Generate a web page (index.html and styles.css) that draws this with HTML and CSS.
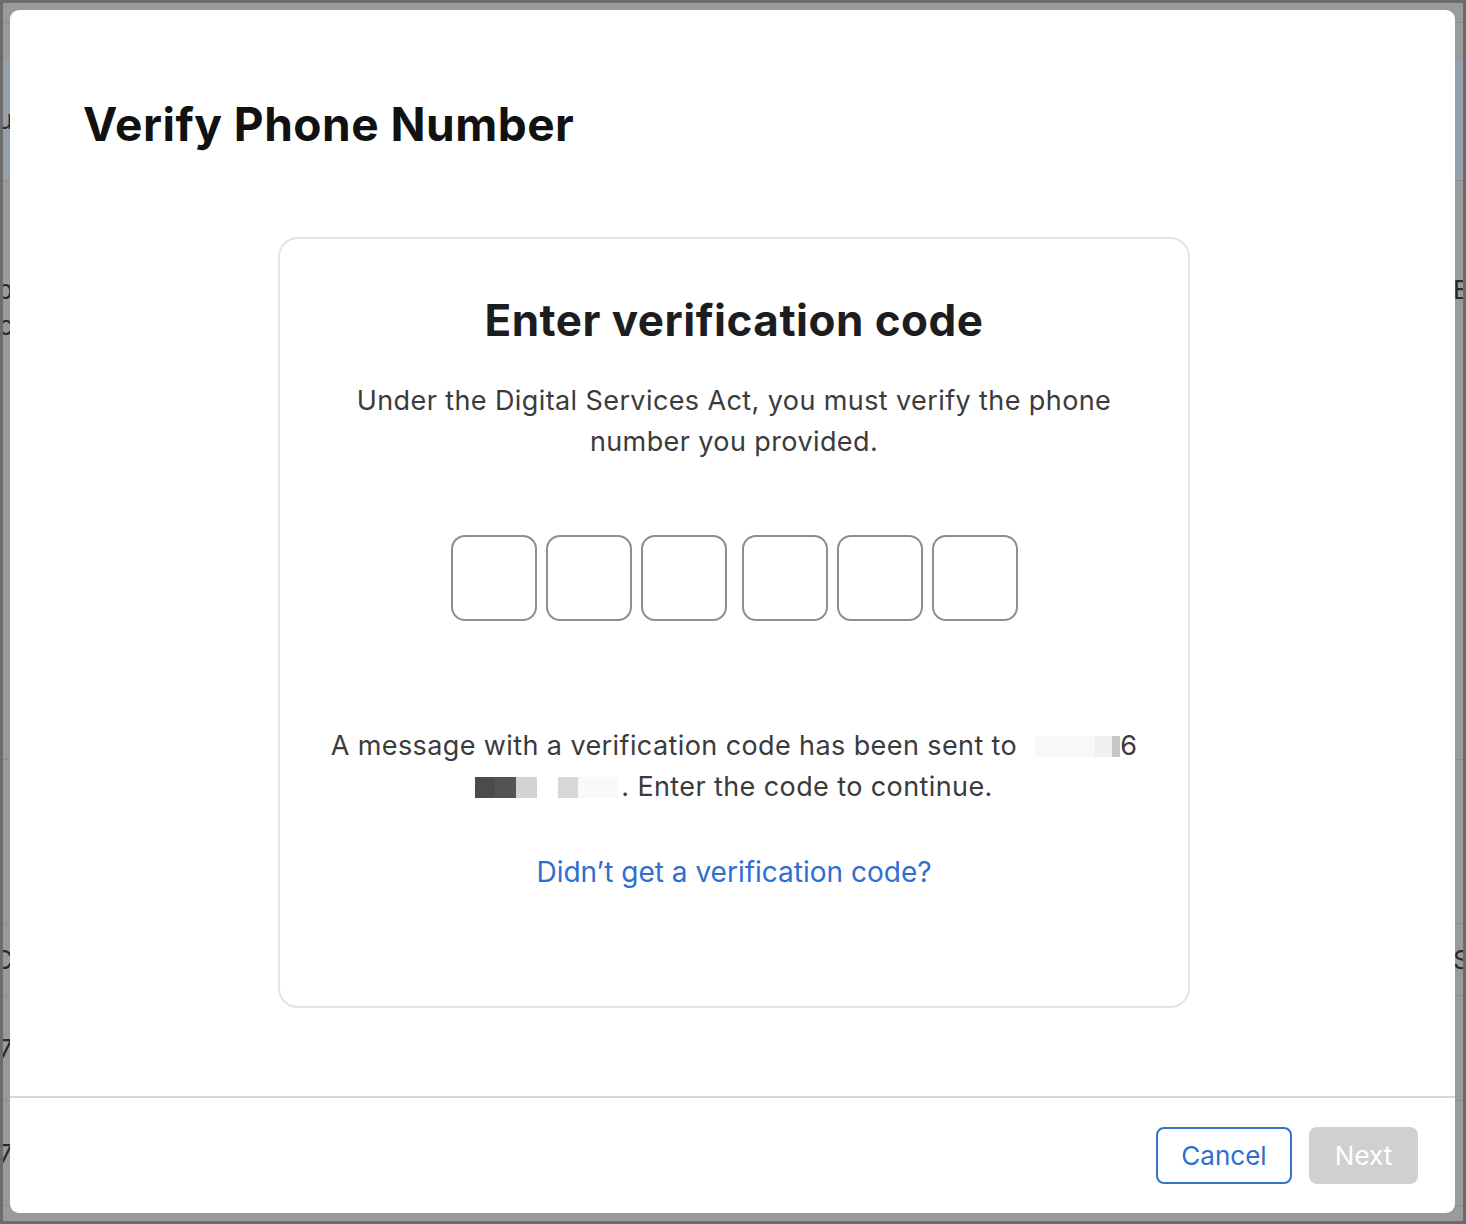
FILE: index.html
```html
<!DOCTYPE html>
<html lang="en">
<head>
    <meta charset="UTF-8">
    <meta name="viewport" content="width=device-width, initial-scale=1.0">
    <title>Verify Phone Number</title>
    <link rel="stylesheet" href="styles.css">
</head>
<body>
    <div class="page">
        <div class="bg-row bg-top"></div>
        <div class="bg-row bg-band"><span class="bg-left">ou</span><span class="bg-right"></span></div>
        <div class="bg-row bg-tall"><span class="bg-left">op<br>c</span><span class="bg-right">E</span></div>
        <div class="bg-row bg-mid"></div>
        <div class="bg-row bg-cell"><span class="bg-left">C</span><span class="bg-right">S</span></div>
        <div class="bg-row bg-cell2"><span class="bg-left">7!</span><span class="bg-right"></span></div>
        <div class="bg-row bg-cell2"><span class="bg-left">7!</span><span class="bg-right"></span></div>
    </div>

    <div class="modal">
        <div class="modal-body">
            <h1 class="modal-title">Verify Phone Number</h1>

            <section class="card">
                <h2 class="card-title">Enter verification code</h2>
                <p class="card-text">Under the Digital Services Act, you must verify the phone<br>number you provided.</p>

                <div class="code-inputs">
                    <div class="code-group">
                        <input class="code-box" type="text" maxlength="1">
                        <input class="code-box" type="text" maxlength="1">
                        <input class="code-box" type="text" maxlength="1">
                    </div>
                    <div class="code-group">
                        <input class="code-box" type="text" maxlength="1">
                        <input class="code-box" type="text" maxlength="1">
                        <input class="code-box" type="text" maxlength="1">
                    </div>
                </div>

                <p class="card-text message">A message with a verification code has been sent to <span class="redact r-light"><i></i><i></i><i></i><i class="dim"></i><i class="mid"></i></span>6<br><span class="redact r-dark"><i></i><i></i><i class="pale"></i></span><span class="redact r-dark2"><i class="pale"></i><i class="wide"></i></span>. Enter the code to continue.</p>

                <a class="resend" href="#">Didn’t get a verification code?</a>
            </section>
        </div>

        <footer class="modal-footer">
            <button class="btn btn-outline">Cancel</button>
            <button class="btn btn-disabled" disabled>Next</button>
        </footer>
    </div>
</body>
</html>
```

FILE: styles.css
```css
body, h1, h2, p {
    margin: 0;
    padding: 0;
}

body {
    font-family: Inter, "Noto Sans", sans-serif;
    background-color: #9a9a9a;
    border: 3px solid #6c6c6c;
    height: 1224px;
    box-sizing: border-box;
    overflow: hidden;
    position: relative;
}

/* page behind the overlay */
.page {
    display: flex;
    flex-direction: column;
    color: #2a2a2a;
    font-size: 26px;
    height: 1218px;
    overflow: hidden;
}

.bg-row {
    display: flex;
    justify-content: space-between;
    box-sizing: border-box;
    flex-shrink: 0;
    border-bottom: 1px solid #8c8c8c;
}

.bg-top {
    height: 20px;
}

.bg-band {
    height: 124px;
    margin-top: 34px;
    border-top: 1px solid #8e97a2;
    background-color: #97a0aa;
    align-items: center;
}

.bg-tall {
    height: 579px;
    padding-top: 91px;
    line-height: 36px;
    align-items: flex-start;
}

.bg-mid {
    height: 164px;
}

.bg-cell {
    height: 72px;
    align-items: center;
}

.bg-cell2 {
    height: 105px;
    align-items: center;
}

.bg-left {
    width: 10px;
    overflow: hidden;
    white-space: nowrap;
    direction: rtl;
    text-align: left;
}

.bg-right {
    width: 10px;
    overflow: hidden;
    white-space: nowrap;
}

/* modal */
.modal {
    position: absolute;
    top: 7px;
    left: 7px;
    width: 1445px;
    height: 1203px;
    background-color: #ffffff;
    border-radius: 9px;
    display: flex;
    flex-direction: column;
    color: #1d1d1f;
}

.modal-body {
    flex: 1;
    padding: 89px 73px 0;
    display: flex;
    flex-direction: column;
}

.modal-title {
    font-size: 46px;
    line-height: 50px;
    font-weight: 700;
    letter-spacing: 0.5px;
    color: #111111;
}

.card {
    align-self: center;
    margin: 88px 0 0 3px;
    width: 912px;
    height: 771px;
    box-sizing: border-box;
    border: 2px solid #e4e4e4;
    border-radius: 20px;
    display: flex;
    flex-direction: column;
    align-items: center;
    text-align: center;
    padding-top: 51px;
}

.card-title {
    font-size: 44px;
    line-height: 60px;
    font-weight: 700;
    letter-spacing: 0.5px;
    color: #1d1d1f;
}

.card-text {
    margin-top: 30px;
    font-size: 27px;
    line-height: 41px;
    letter-spacing: 0.4px;
    color: #3b3b3b;
}

.code-inputs {
    display: flex;
    gap: 15px;
    margin-top: 73px;
}

.code-group {
    display: flex;
    gap: 9px;
}

.code-box {
    width: 86px;
    height: 86px;
    box-sizing: border-box;
    border: 2px solid #8e8e8e;
    border-radius: 14px;
    background: #ffffff;
    padding: 0;
    font-size: 36px;
    text-align: center;
}

.message {
    margin-top: 104px;
}

.redact {
    display: inline-flex;
    height: 21px;
    vertical-align: -2px;
}

.redact i {
    display: block;
    width: 20px;
    height: 100%;
}

.r-light {
    margin-left: 10px;
}

.r-light i {
    background-color: #f8f8fa;
}

.r-light i.dim {
    width: 17px;
    background-color: #f0f0f2;
}

.r-light i.mid {
    width: 8px;
    background-color: #c6c6c8;
}

.r-dark i {
    width: 21px;
    background-color: #4b4b4b;
}

.r-dark i:first-child {
    width: 20px;
}

.r-dark i:nth-child(2) {
    background-color: #545454;
}

.r-dark i.pale {
    background-color: #d3d3d3;
}

.r-dark2 {
    margin-left: 21px;
    margin-right: 3px;
}

.r-dark2 i.pale {
    background-color: #d8d8d8;
}

.r-dark2 i.wide {
    width: 40px;
    background-color: #f9f9fb;
}

.resend {
    margin-top: 45px;
    font-size: 28px;
    line-height: 40px;
    color: #2f6ed1;
    text-decoration: none;
}

.modal-footer {
    border-top: 2px solid #d8d8d8;
    display: flex;
    justify-content: flex-end;
    gap: 17px;
    padding: 29px 37px 29px;
}

.btn {
    height: 57px;
    border-radius: 8px;
    font-family: Inter, "Noto Sans", sans-serif;
    font-size: 26px;
    box-sizing: border-box;
    cursor: pointer;
}

.btn-outline {
    width: 136px;
    background-color: #ffffff;
    border: 2px solid #3572c9;
    color: #2f6ed1;
}

.btn-disabled {
    width: 109px;
    background-color: #d0d0d0;
    border: none;
    color: #ffffff;
    cursor: default;
}
```
